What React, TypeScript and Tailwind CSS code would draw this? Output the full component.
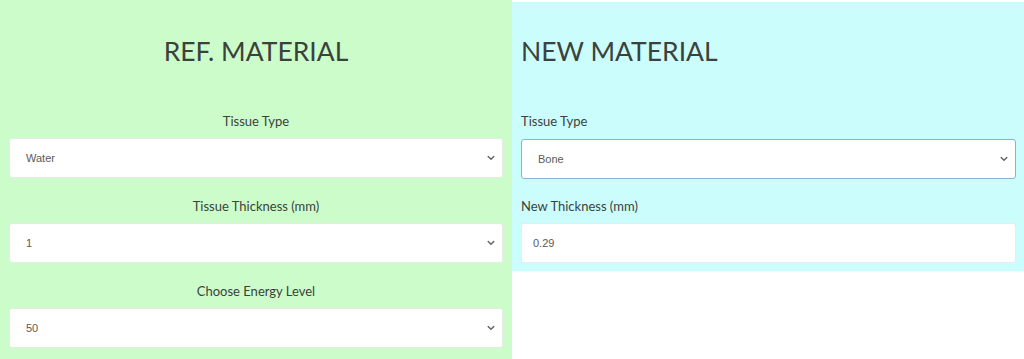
import React from "react";

const Chevron = () => (
  <svg width="8" height="6" viewBox="0 0 8 6" className="absolute right-[7px] top-1/2 -translate-y-1/2" fill="none">
    <path d="M1.2 1.5 L4 4.3 L6.8 1.5" stroke="#666" strokeWidth="1.5" strokeLinecap="round" strokeLinejoin="round" />
  </svg>
);

function SelectBox({ value, focused }: { value: string; focused?: boolean }) {
  return (
    <div
      className={
        "relative h-[40px] bg-white rounded-[3px] border flex items-center pl-[16px] " +
        (focused ? "border-[#86b3d6]" : "border-[#e6ebe6]")
      }
    >
      <span className="text-[11px] text-[#5a5a5a] font-['Liberation_Sans',Arial,sans-serif]">{value}</span>
      <Chevron />
    </div>
  );
}

function InputBox({ value }: { value: string }) {
  return (
    <div className="h-[40px] bg-white rounded-[3px] border border-[#e6eded] flex items-center pl-[11px]">
      <span className="text-[11px] text-[#5a5a5a] font-['Liberation_Sans',Arial,sans-serif]">{value}</span>
    </div>
  );
}

export default function App() {
  return (
    <div className="w-[1024px] h-[359px] flex bg-white font-['Lato',sans-serif] text-[#3b423b] overflow-hidden">
      <div className="w-[512px] h-full bg-[#cdfccb] px-[9px] pt-[35px] text-center">
        <h2 className="text-[26.5px] leading-[33px] font-normal">REF. MATERIAL</h2>
        <div className="mt-[43px] text-[13px] leading-[20px]">Tissue Type</div>
        <div className="mt-[7px]">
          <SelectBox value="Water" />
        </div>
        <div className="mt-[18px] text-[13px] leading-[20px]">Tissue Thickness (mm)</div>
        <div className="mt-[7px] text-left">
          <SelectBox value="1" />
        </div>
        <div className="mt-[18px] text-[13px] leading-[20px]">Choose Energy Level</div>
        <div className="mt-[7px] text-left">
          <SelectBox value="50" />
        </div>
      </div>
      <div className="w-[512px] self-start mt-[2px] bg-[#ccfdfd] pl-[9px] pr-[8px] pt-[33px] pb-[8px] text-left">
        <h2 className="text-[26.5px] leading-[33px] font-normal">NEW MATERIAL</h2>
        <div className="mt-[43px] text-[13px] leading-[20px]">Tissue Type</div>
        <div className="mt-[8px]">
          <SelectBox value="Bone" focused />
        </div>
        <div className="mt-[17px] text-[13px] leading-[20px]">New Thickness (mm)</div>
        <div className="mt-[7px]">
          <InputBox value="0.29" />
        </div>
      </div>
    </div>
  );
}
